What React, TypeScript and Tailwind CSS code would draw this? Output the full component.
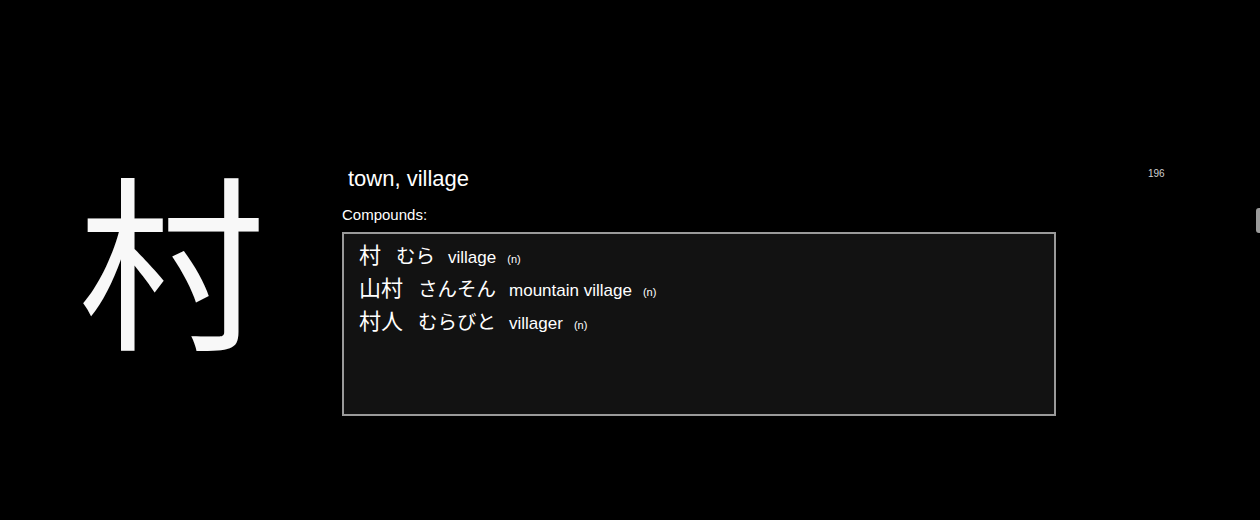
const compounds = [
  { word: '村', reading: 'むら', meaning: 'village', pos: '(n)' },
  { word: '山村', reading: 'さんそん', meaning: 'mountain village', pos: '(n)' },
  { word: '村人', reading: 'むらびと', meaning: 'villager', pos: '(n)' },
]

const App = () => {
  return (
    <div className="relative h-[520px] w-[1260px] overflow-hidden bg-black text-white font-['Liberation_Sans','Noto_Sans_CJK_JP',sans-serif]">
      <div className="flex pt-[166px]">
        <div className="w-[342px] shrink-0 pl-[78px] -mt-[5px] text-[187px] leading-none font-['Noto_Sans_CJK_JP',sans-serif] text-[#f8f8f8]">
          村
        </div>
        <div className="flex flex-col">
          <div className="pl-[6px] text-[22px] leading-[26px]">town, village</div>
          <div className="mt-[14px] text-[15px] leading-[18px]">Compounds:</div>
          <div className="mt-[8px] h-[184px] w-[714px] border-2 border-[#9a9a9a] bg-[#121212] pl-[15px] pt-[3px]">
            {compounds.map((c) => (
              <div key={c.word} className="flex items-baseline h-[33px]">
                <span className="text-[22px] font-['Noto_Sans_CJK_JP',sans-serif] mr-[15px]">{c.word}</span>
                <span className="text-[19.5px] font-['Noto_Sans_CJK_JP',sans-serif] mr-[13px]">{c.reading}</span>
                <span className="text-[17px] mr-[11px]">{c.meaning}</span>
                <span className="text-[11px]">{c.pos}</span>
              </div>
            ))}
          </div>
        </div>
        <div className="ml-[92px] text-[10px] text-[#d0d0d0]">196</div>
      </div>
      <div className="absolute right-0 top-[208px] h-[25px] w-[4px] rounded-l-[3px] bg-[#9a9a9a]"></div>
    </div>
  )
}

export default App
